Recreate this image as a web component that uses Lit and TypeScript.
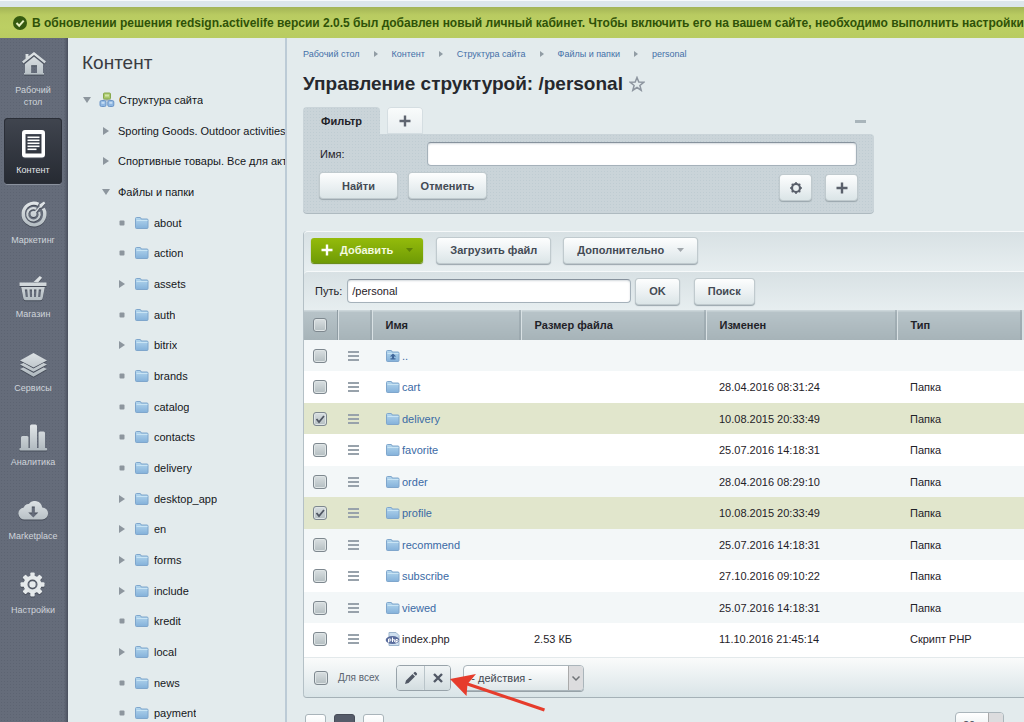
import { LitElement, html, css, svg, nothing } from "lit";
import { customElement } from "lit/decorators.js";
import { classMap } from "lit/directives/class-map.js";

type TreeItem = { text: string; level: 0 | 1 | 2; state: "open" | "closed" | "leaf" };
type FileRow = { name: string; kind: "up" | "folder" | "php"; size?: string; date?: string; type?: string; checked?: boolean };

const closedDirs = ["assets", "bitrix", "desktop_app", "en", "forms", "include", "local"];
const dirs = [
  "about", "action", "assets", "auth", "bitrix", "brands", "catalog", "contacts", "delivery",
  "desktop_app", "en", "forms", "include", "kredit", "local", "news", "payment",
];

const tree: TreeItem[] = [
  { text: "Структура сайта", level: 0, state: "open" },
  { text: "Sporting Goods. Outdoor activities", level: 1, state: "closed" },
  { text: "Спортивные товары. Все для активных", level: 1, state: "closed" },
  { text: "Файлы и папки", level: 1, state: "open" },
  ...dirs.map((d): TreeItem => ({ text: d, level: 2, state: closedDirs.includes(d) ? "closed" : "leaf" })),
];

const rows: FileRow[] = [
  { name: "..", kind: "up" },
  { name: "cart", kind: "folder", date: "28.04.2016 08:31:24", type: "Папка" },
  { name: "delivery", kind: "folder", date: "10.08.2015 20:33:49", type: "Папка", checked: true },
  { name: "favorite", kind: "folder", date: "25.07.2016 14:18:31", type: "Папка" },
  { name: "order", kind: "folder", date: "28.04.2016 08:29:10", type: "Папка" },
  { name: "profile", kind: "folder", date: "10.08.2015 20:33:49", type: "Папка", checked: true },
  { name: "recommend", kind: "folder", date: "25.07.2016 14:18:31", type: "Папка" },
  { name: "subscribe", kind: "folder", date: "27.10.2016 09:10:22", type: "Папка" },
  { name: "viewed", kind: "folder", date: "25.07.2016 14:18:31", type: "Папка" },
  { name: "index.php", kind: "php", size: "2.53 КБ", date: "11.10.2016 21:45:14", type: "Скрипт PHP" },
];

const gearTeeth = (n: number, inner: number, outer: number, half: number) =>
  Array.from({ length: n }, (_, i) => svg`<rect x=${-half} y=${-outer} width=${half * 2} height=${outer - inner} rx="1" transform="rotate(${(i * 360) / n})"/>`);

const navIcons = {
  home: svg`<path d="M18 5 30 14.5 28.600 16.400 18 8 7.400 16.400 6 14.500 9.500 11.700V7h3v2.300z"/><path fill-rule="evenodd" d="M18 9.800 27 17v9.500H9V17zM15.200 18.200v8h5.800v-8z"/><path d="M8 26h20v1.600H8z"/>`,
  content: svg`<path fill="#fff" fill-rule="evenodd" d="M9 3h17a3 3 0 0 1 3 3v21.500a3 3 0 0 1-3 3H9a3 3 0 0 1-3-3V6a3 3 0 0 1 3-3zM9.500 7v19.500h16V7z"/><path fill="#fff" d="M11.500 9.500h12v1.600h-12zM11.500 12.500h12v1.600h-12zM11.500 15.500h12v1.600h-12zM11.500 18.500h12v1.600h-12zM11.500 21.500h9v1.600h-9z"/>`,
  marketing: svg`<g fill="none" stroke="url(#m)"><path stroke-width="3.400" d="M27.300 11.500A10.800 10.800 0 1 1 22.500 7.200"/><path stroke-width="2.200" d="M20.300 11.800A6.200 6.200 0 1 0 23.200 15"/></g><circle cx="17.500" cy="17" r="3"/><path d="M16.800 16.200 23.500 9.500V7.500L28 4.500l1.300 1.800-4 4.500h-1.500L18.600 17.500z"/>`,
  shop: svg`<path d="M3.500 11.500h27v3.500h-27z"/><path d="M17.500 11 23.800 5l2.300 1.800-4 4.700z"/><path fill-rule="evenodd" d="M5.200 16h23.600l-2.200 11.500q-.4 1.800-2.200 1.800H9.600q-1.800 0-2.200-1.800zM8.800 18.500l1 7.500h2l-.6-7.500zM13.600 18.500l.4 7.500h2v-7.500zM18 18.500V26h2l.4-7.500zM22.800 18.500l-.6 7.500h2l1-7.500z"/>`,
  services: svg`<path d="M17.500 8 31 15.500 17.500 22.500 4 15.500z"/><path d="M4 19.500 7.500 18l10 5.500L27.500 18l3.500 1.500-13.500 7.200z"/><path d="M4 24 7.500 22.500l10 5.500 10-5.500L31 24l-13.500 7.700z"/>`,
  stats: svg`<path d="M5 18.500q0-1.500 1.500-1.500h4.500q1.500 0 1.500 1.500V29h1.500V7q0-1.500 1.500-1.500h4Q21 5.500 21 7v22h1.500V14q0-1.500 1.500-1.500h3.500Q29 12.500 29 14v15h1.200q1 0 1 1.300T30.200 31.600H4.500q-1.200 0-1.200-1.300T4.500 29H5z"/>`,
  market: svg`<path fill-rule="evenodd" d="M9 26.500a6 6 0 0 1-1.200-12 5 5 0 0 1 5-3.500A7.500 7.500 0 0 1 26.200 14.500 6 6 0 0 1 26 26.500zM15.800 13.500v6h-3.500l5 5 5-5h-3.500v-6z"/>`,
  settings: svg`<g transform="translate(16.500 17.500)"><circle r="7" fill="none" stroke="url(#m)" stroke-width="4"/>${gearTeeth(8, 7, 12, 2.2)}<circle r="3.200"/></g>`,
};

const nav: { icon: keyof typeof navIcons; text: string; active?: boolean }[] = [
  { icon: "home", text: "Рабочий стол" },
  { icon: "content", text: "Контент", active: true },
  { icon: "marketing", text: "Маркетинг" },
  { icon: "shop", text: "Магазин" },
  { icon: "services", text: "Сервисы" },
  { icon: "stats", text: "Аналитика" },
  { icon: "market", text: "Marketplace" },
  { icon: "settings", text: "Настройки" },
];

const folder = (up = false) => html`<svg class="ico" width="16" height="14" viewBox="0 0 16 14" aria-hidden="true">
  <defs><linearGradient id="f" x1="0" y1="0" x2="0" y2="1"><stop offset="0" stop-color="#b4d7ee"/><stop offset="1" stop-color="#84b1da"/></linearGradient></defs>
  <path d="M1.500 2.500q0-1 1-1H6q1 0 1.200 1.500h5.800q1 0 1 1v7.500q0 1-1 1h-10.500q-1 0-1-1z" fill="url(#f)" stroke="#7fa6cc"/>
  <path d="M2.500 4.500h11" stroke="#c9e4f4"/>
  ${up ? svg`<path d="M8 4.500 4.800 7.500H7v1.800H5.500v1.200h5V9.300H9V7.500h2.200z" fill="#40679a"/>` : nothing}
</svg>`;

const phpIcon = html`<svg class="ico" width="16" height="14" viewBox="0 0 16 14" aria-hidden="true">
  <path d="M4 .500h7l3 3V13.500H4z" fill="#cfe0ef" stroke="#9db5cc"/>
  <ellipse cx="7.500" cy="8" rx="6.800" ry="4" fill="#5a6c9c"/>
  <path d="M3.500 10.500V7h1.500q1 0 1 1T5 9H3.500M7.500 5.500v4.500M7.500 7.800h2.200V10M11 11V7.500h1q1 0 1 1t-1 1h-1" fill="none" stroke="#fff" stroke-width="1"/>
</svg>`;

const siteIcon = html`<svg class="ico" width="16" height="16" viewBox="0 0 16 16" aria-hidden="true">
  <path d="M8 6v3M4 10V8h8v2" fill="none" stroke="#9aa9b5"/>
  <rect x="4.500" y="1" width="7" height="6" rx="1" fill="#a9c86a" stroke="#86a84c"/><path d="M6 2.500h4v2H6z" fill="#d3e5a8"/>
  <rect x="1" y="8.500" width="6" height="6" rx="1.500" fill="#8fb7e2" stroke="#6c95c6"/><path d="M2.500 9.800h3v2h-3z" fill="#c5dcf3"/>
  <rect x="8.800" y="8.500" width="6" height="6" rx="1.500" fill="#8fb7e2" stroke="#6c95c6"/><path d="M10.300 9.800h3v2h-3z" fill="#c5dcf3"/>
</svg>`;

const plus = html`<svg width="12" height="12" viewBox="0 0 12 12" aria-hidden="true"><path d="M4.800 .500h2.400v4.300h4.300v2.400H7.200v4.300H4.800V7.200H.500V4.800h4.300z" fill="currentColor"/></svg>`;

@customElement("app-root")
export class AppRoot extends LitElement {
  static styles = css`
    :host {
      display: flex;
      flex-direction: column;
      height: 100vh;
      overflow: hidden;
      background: #e3ebed;
      font: 11px/16px "Liberation Sans", Arial, sans-serif;
      color: #1f2228;
    }
    * { box-sizing: border-box; }
    svg { display: block; flex: none; }
    a { color: inherit; text-decoration: none; }
    button, input, select { font: inherit; color: inherit; margin: 0; }

    .notice {
      flex: none;
      display: flex;
      align-items: center;
      gap: 5px;
      height: 38px;
      padding: 7px 0 0 13px;
      border-top: 1px solid #f6f9fa;
      background: linear-gradient(#a3b456, #b9cb61 8px, #bccf63 20px, #b6ca60) 0 6px no-repeat, #dce6ea;
      color: #2f5208;
      font-weight: bold;
      font-size: 12px;
      white-space: nowrap;
      overflow: hidden;
    }
    .shell { flex: 1; display: flex; min-height: 0; }

    .nav {
      flex: none;
      width: 68px;
      padding: 0 6px 0 4px;
      overflow: hidden;
      background:
        linear-gradient(90deg, transparent 64px, #4a505e),
        radial-gradient(#5d6472 1px, transparent 1px) 0 0 / 3px 3px, #656c7a;
      color: #d0d5da;
      font-size: 9px;
      line-height: 12px;
      text-align: center;
    }
    .nav a {
      display: flex;
      flex-direction: column;
      align-items: center;
      gap: 3px;
      padding: 9px 8px 8px;
      margin-bottom: 8px;
    }
    .nav a:first-child { margin-bottom: 2px; }
    .nav a.active {
      margin-bottom: 4px;
      border-radius: 4px;
      background: linear-gradient(#40454f, #262a32);
      box-shadow: inset 0 0 0 1px #2a2e37, 0 1px 0 #8a919d;
      color: #e4e7ea;
    }
    .nav svg { fill: url(#m); filter: drop-shadow(0 1px 0 #454b57); }

    .tree {
      flex: none;
      width: 219px;
      padding: 13px 0 0;
      border-right: 2px solid #bccbd6;
      overflow: hidden;
      white-space: nowrap;
      color: #15171b;
    }
    .tree h2 {
      margin: 0 0 9px;
      padding-left: 14px;
      font-size: 19px;
      line-height: 24px;
      font-weight: normal;
      color: #3a3c42;
    }
    .tree ul {
      display: grid;
      grid-template-columns: minmax(0, 1fr);
      grid-auto-rows: 31px 31px 30px;
      margin: 0;
      padding: 0;
      list-style: none;
    }
    .tree li { display: flex; align-items: center; gap: 4px; padding-left: 11px; }
    .tree li.l1 { padding-left: 30px; }
    .tree li.l2 { padding-left: 46px; }
    .tree li a { min-width: 0; overflow: hidden; }
    .tree button { display: flex; flex: none; width: 16px; padding: 0; border: 0; background: none; justify-content: center; }

    .main { flex: 1; min-width: 0; padding: 8px 0 0 16px; overflow: hidden; }
    .crumbs { display: flex; align-items: center; gap: 14px; font-size: 9px; color: #4470a8; }
    h1 {
      display: flex;
      align-items: center;
      gap: 6px;
      margin: 10px 0 11px;
      font-size: 19px;
      line-height: 24px;
      color: #26282d;
    }

    .filter { margin-right: 150px; }
    .tabs { display: flex; gap: 7px; align-items: flex-end; }
    .tab {
      height: 27px;
      padding: 0 18px;
      border: 0;
      border-radius: 4px 4px 0 0;
      background: radial-gradient(#bfccd2 1px, transparent 1px) 0 0 / 3px 3px, #cad4d9;
      font-weight: bold;
      font-size: 11px;
    }
    .tab.add { padding: 0 12px; background: linear-gradient(#fafcfc, #e8eef0); box-shadow: inset 0 0 0 1px #d5dee2; color: #5f6570; }
    .fold { margin: 0 8px 6px auto; padding: 5px 0; border: 0; background: none; }
    .fold::before { content: ""; display: block; width: 11px; height: 3px; background: #a9b5bb; }
    .panel {
      display: flex;
      flex-direction: column;
      gap: 7px;
      padding: 8px 17px 13px;
      border-radius: 0 4px 4px 4px;
      background: radial-gradient(#bfccd2 1px, transparent 1px) 0 0 / 3px 3px, #cad4d9;
      box-shadow: inset 0 -1px 0 #aebac0;
    }
    .field { display: flex; align-items: center; }
    .field label { width: 107px; }
    .field input, .path input {
      flex: 1;
      min-width: 0;
      height: 24px;
      padding: 0 4px;
      border: 1px solid #a5b1ba;
      border-top-color: #87929d;
      border-radius: 4px;
      background: #fff;
      box-shadow: inset 0 1px 2px #d4dade;
    }
    .actions { display: flex; align-items: flex-start; }

    .btn {
      display: inline-flex;
      align-items: center;
      justify-content: center;
      height: 25px;
      padding: 0 13px;
      border: 0;
      border-radius: 3px;
      background: linear-gradient(#fdfefe, #e9eff1 60%, #dbe5e7);
      box-shadow: 0 0 0 1px #c0cace, 0 1px 1px 1px #9aa6ac;
      color: #434a54;
      font-weight: bold;
      font-size: 11px;
      white-space: nowrap;
    }
    .btn.wide { width: 77px; padding: 0; margin-bottom: 3px; }
    .btn.wide + .wide { margin-left: 12px; }
    .btn.square { width: 31px; padding: 0; margin: 2px 0 0 15px; color: #5a606b; }
    .btn.square.first { margin-left: auto; }
    .btn.green { padding: 0 10px; background: linear-gradient(#94bb0b, #6f9b05); box-shadow: 0 1px 1px #5e8304; color: #f4fae0; }
    .btn .lead { margin-right: 7px; color: #fff; }
    .btn .drop { margin-left: 13px; }

    .grid { margin-top: 17px; border-left: 1px solid #b4c0c6; border-radius: 4px 0 0 4px; box-shadow: 0 1px 0 #a5b1b7; }
    .bar {
      display: flex;
      align-items: center;
      height: 40px;
      padding: 0 0 3px 7px;
      gap: 14px;
      border-top: 1px solid #f6f9fa;
      border-radius: 4px 0 0 0;
      background: linear-gradient(#d8e1e4, #e7eef0);
    }
    .path { padding: 0 0 0 11px; height: 39px; gap: 5px; }
    .path input { flex: none; width: 284px; }
    .path .btn:last-child { margin-left: 11px; }

    table { width: 100%; table-layout: fixed; border-collapse: collapse; background: #fff; }
    .c1, .c2 { width: 34px; }
    .c3 { width: 149px; }
    .c4 { width: 185px; }
    .c5 { width: 191px; }
    .c6 { width: 125px; }
    th {
      height: 30px;
      padding: 0 13px;
      border-right: 1px solid #d9e1e4;
      background: linear-gradient(90deg, transparent calc(100% - 1px), #8f9ca3 0), linear-gradient(#ccd6da 1px, #b7c3c8 2px, #a6b3b8);
      text-align: left;
    }
    td { height: 31px; padding: 0 13px; white-space: nowrap; }
    tr:nth-child(even) td { height: 32px; }
    tbody tr:last-child td { height: 34px; padding-bottom: 2px; }
    th.tick, td.tick { padding: 0 0 0 9px; }
    th.act, td.act { padding: 0 0 0 10px; }
    tr.alt { background: #f3f7f8; }
    tr.sel { background: #e1e6cc; }
    .file { display: flex; align-items: center; gap: 1px; color: #3a6aa5; }
    .file.dark { color: #1f2228; }
    .menu { display: block; width: 11px; height: 10px; padding: 0; border: 0; background: linear-gradient(#98a2ab 2px, transparent 2px) 0 0 / 11px 4px; }

    input[type="checkbox"] {
      appearance: none;
      display: block;
      width: 14px;
      height: 14px;
      border: 1px solid #7e888f;
      border-radius: 3px;
      background: linear-gradient(#d9dfe1, #b4bec1);
      box-shadow: inset 0 0 0 1px #dfe5e6;
    }
    input[type="checkbox"]:checked {
      background: url('data:image/svg+xml,<svg xmlns="http://www.w3.org/2000/svg" viewBox="0 0 12 12"><path d="M2.5 6l2.500 3 5-6" fill="none" stroke="%23505763" stroke-width="1.800"/></svg>'), linear-gradient(#d9dfe1, #b4bec1);
    }

    .foot {
      position: relative;
      display: flex;
      align-items: center;
      height: 40px;
      padding-left: 10px;
      border-top: 1px solid #e3e9eb;
      background: linear-gradient(#fafbfb, #d9e4e7);
      color: #5b6470;
      font-size: 10px;
      border-radius: 0 0 0 4px;
    }
    .foot label { margin-left: 10px; }
    .pair { display: flex; margin: 0 12px 0 17px; border: 1px solid #98a3aa; border-radius: 4px; }
    .pair button { display: flex; align-items: center; justify-content: center; width: 27px; height: 24px; padding: 0; border: 0; background: linear-gradient(#f0f4f5, #d3dde0); color: #515865; border-radius: 3px; }
    .pair button + button { width: 26px; border-left: 1px solid #b9c4c9; border-radius: 0 3px 3px 0; }
    .select { display: flex; border: 1px solid #aab5bb; border-radius: 4px; box-shadow: 0 1px 0 #97a2a8; overflow: hidden; background: linear-gradient(#fff, #dfe7e9); }
    .select select {
      appearance: none;
      width: 119px;
      height: 24px;
      padding: 0 20px 0 7px;
      border: 0;
      border-radius: 0;
      background: url('data:image/svg+xml,<svg xmlns="http://www.w3.org/2000/svg" width="15" height="24"><path fill="%23dcdcde" stroke="%23aaa" d="M.5-.5h15v25H.5z"/><path d="M4.500 10.500l3.500 3.500 3.500-3.500" fill="none" stroke="%23707478" stroke-width="1.500"/></svg>') right / 15px 24px no-repeat;
      font-size: 11px;
      color: #3f4651;
    }
    .arrow { position: absolute; left: 145px; top: 15px; pointer-events: none; }

    .pager { display: flex; align-items: flex-start; gap: 8px; padding: 17px 20px 0 2px; }
    .page { width: 21px; height: 26px; padding: 0; border: 1px solid #a9b4ba; border-radius: 3px; background: linear-gradient(#fff, #e3eaec); }
    .page.now { background: #555b69; border-color: #474c58; color: #fff; }
    .pager .select { margin: -2px 0 0 auto; }
    .pager select { width: 47px; }
  `;

  private toggle(state: TreeItem["state"]) {
    const shape =
      state === "open" ? svg`<path d="M1 2h8L5 8z"/>` :
      state === "closed" ? svg`<path d="M2 1v8l6-4z"/>` :
      svg`<rect x="2.500" y="2.500" width="5" height="5" rx="1"/>`;
    const icon = html`<svg width="10" height="10" viewBox="0 0 10 10" fill="#8d969e" aria-hidden="true">${shape}</svg>`;
    return html`<button aria-label="Раскрыть">${icon}</button>`;
  }

  private row(r: FileRow, i: number) {
    const icon = r.kind === "php" ? phpIcon : folder(r.kind === "up");
    return html`<tr class=${classMap({ alt: i % 2 === 0, sel: !!r.checked })}>
      <td class="tick"><input type="checkbox" aria-label=${r.name} .checked=${!!r.checked} /></td>
      <td class="act"><button class="menu" aria-label="Действия"></button></td>
      <td><a href="#" class=${classMap({ file: true, dark: r.kind === "php" })}>${icon}${r.name}</a></td>
      <td>${r.size}</td>
      <td>${r.date}</td>
      <td>${r.type}</td>
      <td></td>
    </tr>`;
  }

  private drop(color: string) {
    return html`<svg class="drop" width="7" height="5" viewBox="0 0 7 5" aria-hidden="true"><path d="M0 0h7L3.500 4z" fill=${color} /></svg>`;
  }

  render() {
    const crumbs = ["Рабочий стол", "Контент", "Структура сайта", "Файлы и папки", "personal"];
    return html`
      <div class="notice">
        <svg width="14" height="14" viewBox="0 0 14 14" aria-hidden="true"><circle cx="7" cy="7" r="7" fill="#355a10"/><path d="M3.500 7l2.700 2.700 4.500-5" fill="none" stroke="#e6f0c0" stroke-width="2"/></svg>
        <span>В обновлении решения redsign.activelife версии 2.0.5 был добавлен новый личный кабинет. Чтобы включить его на вашем сайте, необходимо выполнить настройки</span>
      </div>
      <div class="shell">
        <nav class="nav">
          ${nav.map((n) => html`<a href="#" class=${classMap({ active: !!n.active })}>
            <svg width="34" height="34" viewBox="0 0 34 34" aria-hidden="true">
              <defs><linearGradient id="m" gradientUnits="userSpaceOnUse" x1="0" y1="3" x2="0" y2="30"><stop offset="0" stop-color="#e6eaec"/><stop offset="1" stop-color="#b2bbc1"/></linearGradient></defs>
              ${navIcons[n.icon]}
            </svg>
            <span>${n.text}</span>
          </a>`)}
        </nav>
        <aside class="tree">
          <h2>Контент</h2>
          <ul>
            ${tree.map((t) => html`<li class="l${t.level}">
              ${this.toggle(t.state)}
              ${t.level === 0 ? siteIcon : t.level === 2 ? folder() : nothing}
              <a href="#">${t.text}</a>
            </li>`)}
          </ul>
        </aside>
        <main class="main">
          <nav class="crumbs">
            ${crumbs.map((c, i) => html`${i ? html`<svg width="4" height="6" viewBox="0 0 4 6" aria-hidden="true"><path d="M0 0v6l4-3z" fill="#919ca4"/></svg>` : nothing}<a href="#">${c}</a>`)}
          </nav>
          <h1>Управление структурой: /personal
            <svg width="16" height="16" viewBox="0 0 16 16" aria-hidden="true"><path d="M8 1.500l1.800 4.600 4.900.2-3.800 3.100 1.300 4.800L8 11.500l-4.200 2.700 1.300-4.800L1.300 6.300l4.900-.2z" fill="none" stroke="#8d959f" stroke-width="1.500"/></svg>
          </h1>
          <section class="filter">
            <div class="tabs">
              <button class="tab">Фильтр</button>
              <button class="tab add" aria-label="Добавить фильтр">${plus}</button>
              <button class="fold" aria-label="Свернуть"></button>
            </div>
            <div class="panel">
              <div class="field"><label for="name">Имя:</label><input id="name" type="text" /></div>
              <div class="actions">
                <button class="btn wide">Найти</button>
                <button class="btn wide">Отменить</button>
                <button class="btn square first" aria-label="Настройки">
                  <svg width="14" height="14" viewBox="-7 -7 14 14" aria-hidden="true" fill="currentColor"><circle r="4" fill="none" stroke="currentColor" stroke-width="2.200"/>${gearTeeth(8, 4, 6, 1)}</svg>
                </button>
                <button class="btn square" aria-label="Добавить условие">${plus}</button>
              </div>
            </div>
          </section>
          <section class="grid">
            <div class="bar">
              <button class="btn green"><span class="lead">${plus}</span>Добавить${this.drop("#5f8206")}</button>
              <button class="btn">Загрузить файл</button>
              <button class="btn">Дополнительно${this.drop("#a0a6ab")}</button>
            </div>
            <div class="bar path">
              <label for="path">Путь:</label>
              <input id="path" type="text" value="/personal" />
              <button class="btn">OK</button>
              <button class="btn">Поиск</button>
            </div>
            <table>
              <colgroup><col class="c1" /><col class="c2" /><col class="c3" /><col class="c4" /><col class="c5" /><col class="c6" /><col /></colgroup>
              <thead><tr>
                <th class="tick"><input type="checkbox" aria-label="Выбрать все" /></th>
                <th class="act"></th><th>Имя</th><th>Размер файла</th><th>Изменен</th><th>Тип</th><th></th>
              </tr></thead>
              <tbody>${rows.map((r, i) => this.row(r, i))}</tbody>
            </table>
            <div class="foot">
              <input type="checkbox" id="all" /><label for="all">Для всех</label>
              <div class="pair">
                <button aria-label="Редактировать"><svg width="14" height="14" viewBox="0 0 14 14" fill="currentColor" aria-hidden="true"><path d="M1 13l1-3.500L8.500 3 11 5.500 4.500 12zM9.300 2.200l1-1q.7-.7 1.500 0l1 1q.7.7 0 1.500l-1 1z"/></svg></button>
                <button aria-label="Удалить"><svg width="10" height="10" viewBox="0 0 10 10" aria-hidden="true"><path d="M1 1l8 8M9 1L1 9" stroke="currentColor" stroke-width="2.400"/></svg></button>
              </div>
              <div class="select"><select aria-label="Действия"><option>- действия -</option></select></div>
              <svg class="arrow" width="100" height="40" viewBox="0 0 100 40" aria-hidden="true"><path d="M14 9.500 95.500 37" stroke="#e63c2c" stroke-width="3.200"/><path d="M1 6 27 1 18.500 11 17.500 23z" fill="#e63c2c"/></svg>
            </div>
          </section>
          <div class="pager">
            <button class="page" aria-label="Назад"></button>
            <button class="page now" aria-label="Страница"></button>
            <button class="page" aria-label="Вперед"></button>
            <div class="select"><select aria-label="На странице"><option>20</option></select></div>
          </div>
        </main>
      </div>
    `;
  }
}
